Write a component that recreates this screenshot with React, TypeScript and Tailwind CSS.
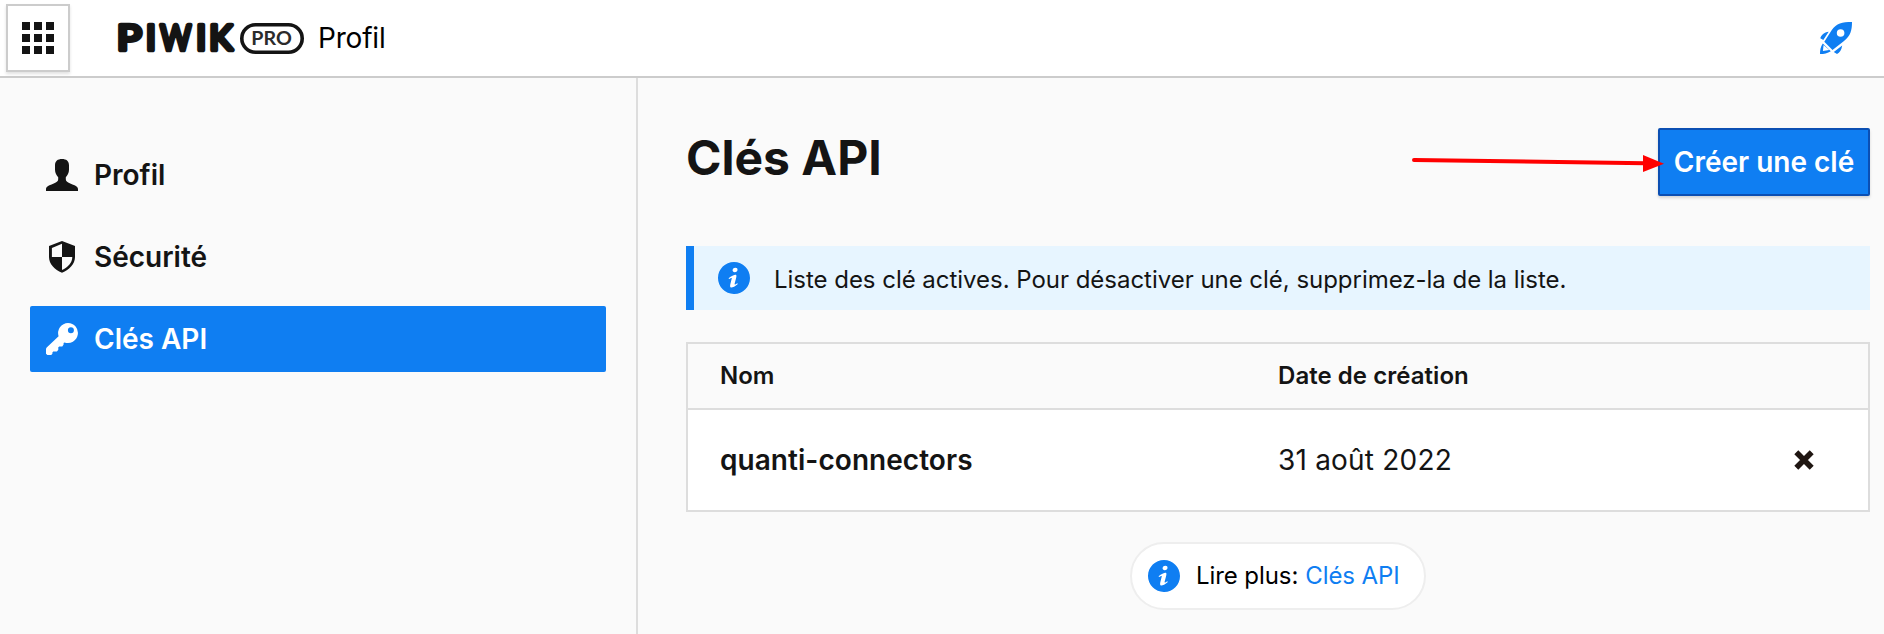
import type { ReactNode } from "react";

function InfoIcon() {
  return (
    <svg viewBox="0.4 0.4 19.2 19.2" className="size-8 shrink-0 fill-[#0f7ef2]">
      <circle cx="10" cy="10" r="9" className="fill-white" />
      <path d="M10 .4C4.697.4.399 4.698.399 10A9.6 9.6 0 0 0 10 19.601c5.301 0 9.6-4.298 9.6-9.601 0-5.302-4.299-9.6-9.6-9.6m.896 3.466c.936 0 1.211.543 1.211 1.164 0 .775-.62 1.492-1.679 1.492-.886 0-1.308-.445-1.282-1.182 0-.621.519-1.474 1.75-1.474M8.498 15.750c-.64 0-1.107-.389-.66-2.094l.733-3.025c.127-.484.148-.678 0-.678-.191 0-1.022.334-1.512.664l-.319-.523c1.555-1.299 3.343-2.061 4.108-2.061.64 0 .746.756.427 1.920l-.84 3.180c-.149.562-.085.756.064.756.191 0 .82-.232 1.438-.719l.362.486c-1.513 1.512-3.162 2.094-3.801 2.094" />
    </svg>
  );
}

function UserIcon() {
  return (
    <svg viewBox="0 0 32 32" className="size-8 shrink-0 fill-current">
      <path d="M16 0c4.300 0 7 2 7 6.200v4.500c0 3.500-1.600 5.500-3.200 7.500v2c0 2.200 1.800 3.200 5 4.500 4.600 1.800 7.200 2.800 7.200 5.300v2H0v-2c0-2.500 2.600-3.500 7.200-5.300 3.200-1.300 5-2.300 5-4.500v-2C10.600 16.200 9 14.200 9 10.700V6.200C9 2 11.700 0 16 0z" />
    </svg>
  );
}

function ShieldIcon() {
  return (
    <svg viewBox="0 0 32 32" className="size-8 shrink-0 fill-current">
      <path
        fillRule="evenodd"
        d="M16 0 29 5v11c0 7-5.500 12.500-13 15.700C8.500 28.500 3 23 3 16V5zM16 2.800 5.900 7V16H16zM16 16v13C21.800 26.200 26.200 22 26.300 16z"
      />
    </svg>
  );
}

function KeyIcon() {
  return (
    <svg viewBox="0 0 32 32" className="size-8 shrink-0 fill-current">
      <path
        fillRule="evenodd"
        d="M22 0a10 10 0 1 1-3.500 19.400L17.600 20v1.600l-1.300 1.800h-3l-1 .8v2.600l-1.400 1.600H7.200l-.8 1v1.300L5.200 32H1.400L0 30.800v-5l.7-1.300L12.600 13.200A10 10 0 0 1 22 0zm2.900 4.200a3 3 0 1 0 .01 6 3 3 0 0 0 0-6z"
      />
    </svg>
  );
}

function RocketIcon() {
  return (
    <svg viewBox="0 0 32 32" className="size-8 shrink-0 fill-[#0f7ef2]">
      <path
        fillRule="evenodd"
        d="M32 0c0 8-1.500 14-8 19L12.500 28 4.300 19.700 11.800 8C16.500 1.300 22 0 32 0zM20.600 7.200a3.800 3.800 0 1 0 .01 7.600 3.800 3.800 0 0 0 0-7.600z"
      />
      <path d="M8.700 9.700 3.300 18 .3 16.300c1-3.400 3.700-6 8.400-6.600zM22.200 23.600c-.8 4.600-2.500 7.500-5.200 8.400l-3.200-2.100z" />
      <path fillRule="evenodd" d="M2.800 21.400 10.800 29.200C7.500 31.400 4 32 0 32c0-4 .5-7.500 2.800-10.600zM3.600 23 2.900 29l6.300-.9z" />
    </svg>
  );
}

function Logo() {
  return (
    <svg viewBox="0 0 188 48" className="h-12 w-[188px] shrink-0 overflow-visible">
      <text
        y="36.400"
        fontSize="35"
        strokeWidth="4.600"
        strokeLinejoin="round"
        className="fill-[#141414] stroke-[#141414] font-['Lato'] font-normal"
      >
        <tspan x="1" textLength="24.500" lengthAdjust="spacingAndGlyphs">P</tspan>
        <tspan x="30">I</tspan>
        <tspan x="44.200" textLength="30.800" lengthAdjust="spacingAndGlyphs">W</tspan>
        <tspan x="80.200">I</tspan>
        <tspan x="93.300">K</tspan>
      </text>
      <rect x="125.800" y="10.800" width="60.400" height="27.400" rx="13.700" className="fill-none stroke-[#141414]" strokeWidth="3.600" />
      <text
        x="135.300"
        y="30.500"
        fontSize="18"
        textLength="40.500"
        lengthAdjust="spacingAndGlyphs"
        className="fill-[#2b2b2b] font-['Lato'] font-bold"
      >
        PRO
      </text>
    </svg>
  );
}

function NavItem({ icon, label, active = false }: { icon: ReactNode; label: string; active?: boolean }) {
  return (
    <a
      className={
        active
          ? "flex h-[66px] items-center gap-4 rounded-[2px] bg-[#0f7ef2] px-4 text-white"
          : "flex h-[66px] items-center gap-4 px-4"
      }
    >
      {icon}
      <span className="text-[28px] leading-8 font-semibold">{label}</span>
    </a>
  );
}

export default function App() {
  const cells = Array.from({ length: 9 });
  return (
    <div className="relative flex h-[634px] w-[1884px] flex-col overflow-hidden bg-[#fafafa] font-['Inter',sans-serif] text-[#141414]">
      <header className="flex h-[78px] shrink-0 items-start border-b-2 border-[#ccc] bg-white pr-8 pl-1.5">
        <button className="mt-1 grid h-[68px] w-16 place-content-center border-2 border-[#ccc] bg-white shadow-[0_2px_3px_rgba(0,0,0,0.12)]">
          <span className="grid grid-cols-3 gap-1">
            {cells.map((_, i) => (
              <span key={i} className="size-2 bg-[#141414]" />
            ))}
          </span>
        </button>
        <div className="flex h-[76px] flex-1 items-center pl-[46px]">
          <Logo />
          <span className="ml-3.5 text-[28px] tracking-[-0.2px] text-black">Profil</span>
          <span className="ml-auto">
            <RocketIcon />
          </span>
        </div>
      </header>

      <div className="flex flex-1">
        <nav className="flex w-[638px] shrink-0 flex-col gap-4 border-r-2 border-[#ddd] pt-16 pr-[30px] pl-[30px]">
          <NavItem icon={<UserIcon />} label="Profil" />
          <NavItem icon={<ShieldIcon />} label="Sécurité" />
          <NavItem icon={<KeyIcon />} label="Clés API" active />
        </nav>

        <main className="flex flex-1 flex-col pt-[50px] pr-3.5 pl-12">
          <div className="flex h-[68px] justify-between">
            <h1 className="text-[48px] leading-[60px] font-bold">Clés API</h1>
            <button className="h-[68px] w-[212px] rounded-[2px] border-2 border-[#0b4fb3] bg-[#0f7ef2] text-[28px] font-semibold whitespace-nowrap text-white shadow-[0_2px_3px_rgba(0,0,0,0.15)]">
              Créer une clé
            </button>
          </div>

          <div className="mt-[50px] flex h-16 items-center border-l-8 border-[#0f7ef2] bg-[#e7f5ff] pl-6">
            <InfoIcon />
            <p className="ml-6 pt-[3px] text-[24px] tracking-[-0.03px]">Liste des clé actives. Pour désactiver une clé, supprimez-la de la liste.</p>
          </div>

          <div className="mt-8 h-[170px] border-2 border-[#ddd]">
            <div className="grid h-[66px] grid-cols-[558px_1fr] items-center border-b-2 border-[#ddd] px-8 text-[24px] font-semibold">
              <span>Nom</span>
              <span className="tracking-[0.05px]">Date de création</span>
            </div>
            <div className="grid h-[100px] grid-cols-[558px_1fr_20px] items-center bg-white pr-[54px] pl-8 text-[28px]">
              <span className="font-semibold tracking-[0.05px]">quanti-connectors</span>
              <span className="tracking-[0.2px]">31 août 2022</span>
              <svg viewBox="0 0 20 20" className="size-5 stroke-[#1f1612]" strokeWidth="5.600">
                <path d="M2.300 2.300 17.700 17.700M17.700 2.300 2.300 17.700" />
              </svg>
            </div>
          </div>

          <div className="mt-[30px] flex h-[68px] w-[296px] items-center self-center rounded-full border-2 border-[#eee] bg-white pl-4 text-[24px] whitespace-nowrap text-black">
            <InfoIcon />
            <span className="ml-4 tracking-[-0.08px]">Lire plus:</span>
            <a className="ml-[7px] tracking-[-0.08px] text-[#0f7ef2]">Clés API</a>
          </div>
        </main>
      </div>

      <svg viewBox="0 0 254 22" className="absolute top-[153px] left-[1411px] h-[22px] w-[254px]">
        <path d="M3 7 234 10.200" className="stroke-[#f00]" strokeWidth="4" strokeLinecap="round" />
        <path d="M232 2 253 10.700 232 19z" className="fill-[#f00]" />
      </svg>
    </div>
  );
}
